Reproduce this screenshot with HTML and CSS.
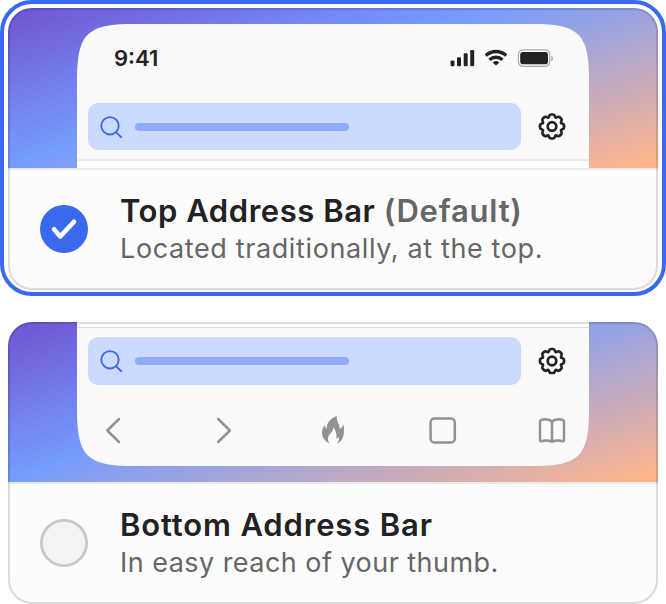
FILE: index.html
```html
<!DOCTYPE html>
<html lang="en">
<head>
<meta charset="utf-8">
<title>Address Bar Position</title>
<link rel="stylesheet" href="styles.css">
</head>
<body>
<svg class="symbols" aria-hidden="true">
  <symbol id="search" viewBox="0 0 24 24"><circle cx="11" cy="10.8" r="8.7"/><path d="M17 17.2l5.2 4.9"/></symbol>
  <symbol id="gear" viewBox="-14 -14 28 28"><path d="M-3.7-9C-2.9-9.2-3.1-12-1.2-12H1.2C3.1-12 2.9-9.2 3.7-9C4.5-8.5 6.3-10.7 7.7-9.3L9.3-7.7C10.7-6.3 8.5-4.5 9-3.7C9.2-2.9 12-3.1 12-1.2V1.2C12 3.1 9.2 2.9 9 3.7C8.5 4.5 10.7 6.3 9.3 7.7L7.7 9.3C6.3 10.7 4.5 8.5 3.7 9C2.9 9.2 3.1 12 1.2 12H-1.2C-3.1 12-2.9 9.2-3.7 9C-4.5 8.5-6.3 10.7-7.7 9.3L-9.3 7.7C-10.7 6.3-8.5 4.5-9 3.7C-9.2 2.9-12 3.1-12 1.2V-1.2C-12-3.1-9.2-2.9-9-3.7C-8.5-4.5-10.7-6.3-9.3-7.7L-7.7-9.3C-6.3-10.7-4.5-8.5-3.7-9Z"/><circle r="4.3"/></symbol>
</svg>
<main class="options">
  <section class="card selected">
    <div class="preview">
      <div class="phone phone-top">
        <div class="status">
          <span class="time">9:41</span>
          <svg class="indicators" width="104" height="20" viewBox="450 48 104 20">
            <g fill="#222"><rect x="450.5" y="60.5" width="4" height="5.7" rx="1.2"/><rect x="457" y="57.3" width="4" height="8.9" rx="1.2"/><rect x="463.7" y="53.2" width="4" height="13" rx="1.2"/><rect x="470.2" y="50" width="4" height="16.2" rx="1.2"/><path d="M496 65.6l-3.2-3.2a4.7 4.7 0 0 1 6.4 0z"/></g>
            <g fill="none" stroke="#222" stroke-width="3.3"><path d="M485.8 55.6a14.8 14.8 0 0 1 20.4 0M489.5 59.8a9.5 9.5 0 0 1 13 0"/></g>
            <rect x="518.4" y="49.8" width="31.4" height="16.6" rx="4.8" fill="none" stroke="#aaa" stroke-width="1.2"/><rect x="520.2" y="52" width="27.8" height="12.2" rx="2.8" fill="#222"/><path d="M551.6 56v5q2.6-2.5 0-5z" fill="#aaa" stroke="#aaa" stroke-width=".5"/>
          </svg>
        </div>
        <div class="address"><div class="field"><svg class="search"><use href="#search"/></svg><span class="placeholder"></span></div><svg class="gear"><use href="#gear"/></svg></div>
        <div class="page"></div>
      </div>
    </div>
    <div class="details">
      <svg class="radio" viewBox="0 0 48 48"><circle cx="24" cy="24" r="24" fill="#3969ef"/><path d="M14 24.2l6.3 7.2L34 16.7" fill="none" stroke="#fff" stroke-width="4.6" stroke-linecap="round" stroke-linejoin="round"/></svg>
      <div><h2 class="title title-top">Top Address Bar <span>(Default)</span></h2><p class="sub sub-top">Located traditionally, at the top.</p></div>
    </div>
  </section>
  <section class="card">
    <div class="preview">
      <div class="phone phone-bottom">
        <div class="page"></div>
        <div class="address"><div class="field"><svg class="search"><use href="#search"/></svg><span class="placeholder"></span></div><svg class="gear"><use href="#gear"/></svg></div>
        <div class="toolbar">
          <svg viewBox="0 0 28 28"><path d="M19 3L7.3 14.5 19 26"/></svg>
          <svg viewBox="0 0 28 28"><path d="M8.2 3l11.7 11.5L8.2 26"/></svg>
          <svg viewBox="0 0 28 28"><path class="flame" d="M10.5 27.7C5.5 25 3 21 3 16.8C3 13.2 4.4 10.8 6.1 9.1C6 11.1 6.5 12.4 7.6 13C7.8 6 12 2 17.9 0C16.9 5.2 20.8 7.5 20.5 12.8C22.5 12 23.7 10.5 24.9 8.4C24.7 12.1 25.2 14 24.8 17.5C24.3 22.5 22 25.7 17.6 27.7C19.4 25.8 20.6 23.5 19.8 20.8C19.3 21.8 18.6 22.4 17.5 22.8C17.8 18.5 17.1 14.9 14.5 11C14.7 16 9.5 17.7 9 22.3C8.8 24.3 9.3 26 10.5 27.7Z"/></svg>
          <svg viewBox="0 0 28 28"><rect x="1.6" y="2.4" width="24.2" height="24.2" rx="3.8"/></svg>
          <svg viewBox="0 0 28 28"><path d="M14 5.4Q8.3 1.7 3 4.2Q2 4.6 2 5.7V24.1Q2 25.7 3.6 25.2Q8.8 23.4 14 25.7Q19.2 23.4 24.4 25.2Q26 25.7 26 24.1V5.7Q26 4.6 25 4.2Q19.7 1.7 14 5.4V25.4"/></svg>
        </div>
      </div>
    </div>
    <div class="details">
      <svg class="radio" viewBox="0 0 48 48"><circle cx="24" cy="24" r="22.6" fill="#f3f3f3" stroke="#c7c7c7" stroke-width="2.8"/></svg>
      <div><h2 class="title title-bottom">Bottom Address Bar</h2><p class="sub sub-bottom">In easy reach of your thumb.</p></div>
    </div>
  </section>
</main>
</body>
</html>
```
FILE: styles.css
```css
* { box-sizing: border-box; }
body { margin: 0; background: #fff; font-family: Inter, "Liberation Sans", sans-serif; }
svg { display: block; flex: none; }
.symbols { display: none; }
.options { display: flex; flex-direction: column; gap: 32px; padding: 8px 8px 0; }
.card { position: relative; width: 650px; height: 282px; border-radius: 24px; background: #fcfcfc; }
.card::after { content: ""; position: absolute; inset: 0; border: 2px solid rgba(0, 0, 0, .13); border-radius: 24px; }
.selected::before { content: ""; position: absolute; inset: -8px -8px -6px; border: 4px solid #3969ef; border-radius: 32px; }
.preview { height: 160px; padding: 0 69px; border-radius: 24px 24px 0 0; overflow: hidden; background: linear-gradient(162deg, #7059d5 3%, #759cff 42%, #ffb68d 98%); }
.phone { width: 512px; height: 144px; display: flex; flex-direction: column; background: #fafafa; }
.phone-top { margin-top: 16px; clip-path: path("M0 144V56C0 10 10 0 56 0H456C502 0 512 10 512 56V144Z"); }
.phone-bottom { clip-path: path("M0 0V88C0 134 10 144 56 144H456C502 144 512 134 512 88V0Z"); }
.status { height: 79px; padding: 24px 35px 0 37px; display: flex; justify-content: space-between; }
.time { margin-top: -1px; font-size: 22px; line-height: 22px; font-weight: 600; color: #222; }
.address { height: 47px; padding: 0 23px 0 11px; display: flex; align-items: center; justify-content: space-between; }
.field { width: 433px; height: 47px; border-radius: 10px; background: #ccdaff; display: flex; align-items: center; padding-left: 11px; gap: 12px; }
.search { width: 24px; height: 24px; fill: none; stroke: #3969ef; stroke-width: 1.9; stroke-linecap: round; }
.placeholder { width: 214px; height: 8px; border-radius: 4px; background: #8fabf9; }
.gear { width: 28px; height: 29px; fill: none; stroke: #222; stroke-width: 2.7; stroke-linejoin: round; }
.phone-top .page { margin-top: 9px; flex: 1; border-top: 2px solid #ebebeb; background: #fff; }
.phone-bottom .page { height: 6px; flex: none; background: #fff; border-bottom: 1px solid #ddd; margin-bottom: 9px; }
.phone-bottom .address, .phone-bottom .field { height: 48px; }
.phone-bottom .gear { height: 28px; }
.toolbar { display: flex; justify-content: space-between; padding: 31px 23px 0; }
.toolbar svg { width: 28px; height: 28px; fill: none; stroke: #929292; stroke-width: 2.5; stroke-linecap: round; stroke-linejoin: round; }
.toolbar .flame { fill: #929292; stroke: none; }
.details { height: 122px; padding: 0 0 2px 32px; border-top: 2px solid #eaeaea; display: flex; align-items: center; gap: 32px; }
.radio { width: 48px; height: 48px; }
.title { margin: -1px 0 1px; font-size: 31px; line-height: 40px; font-weight: 600; color: #222; white-space: nowrap; }
.title-top { letter-spacing: .54px; }
.title span { color: #666; letter-spacing: .78px; }
.title-bottom { letter-spacing: .84px; }
.sub { margin: 0; font-size: 27px; line-height: 34px; color: #666; white-space: nowrap; }
.sub-top { letter-spacing: .62px; }
.sub-bottom { letter-spacing: .46px; }
```
